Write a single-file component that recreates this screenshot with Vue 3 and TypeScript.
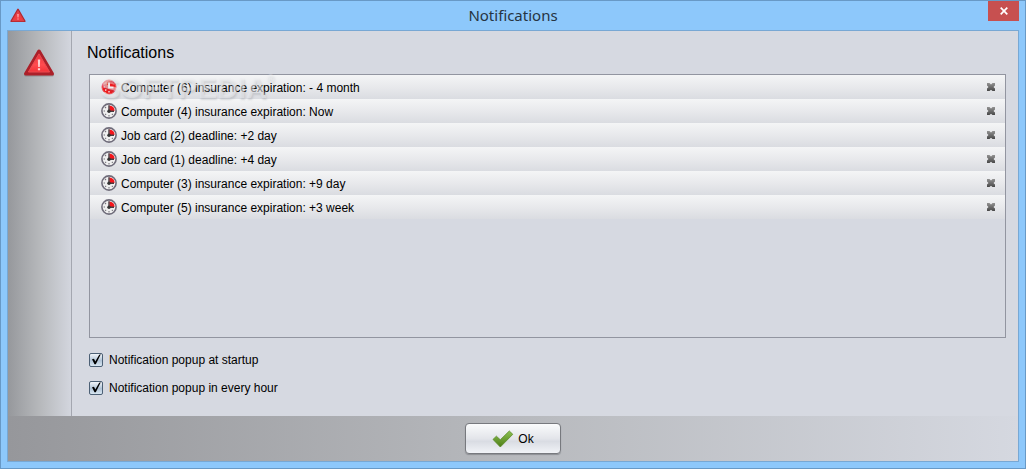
<script setup lang="ts">
import { ref } from 'vue'

interface Notice {
  id: number
  text: string
  overdue: boolean
}

const notices = ref<Notice[]>([
  { id: 1, text: 'Computer (6) insurance expiration: - 4 month', overdue: true },
  { id: 2, text: 'Computer (4) insurance expiration: Now', overdue: false },
  { id: 3, text: 'Job card (2) deadline: +2 day', overdue: false },
  { id: 4, text: 'Job card (1) deadline: +4 day', overdue: false },
  { id: 5, text: 'Computer (3) insurance expiration: +9 day', overdue: false },
  { id: 6, text: 'Computer (5) insurance expiration: +3 week', overdue: false },
])
const atStartup = ref(true)
const everyHour = ref(true)

function dismiss(id: number): void {
  notices.value = notices.value.filter((n) => n.id !== id)
}
</script>

<template>
  <div class="window">
    <header class="titlebar">
      <svg class="app-icon" viewBox="0 0 32 30" aria-hidden="true">
        <path d="M16 3 L29.5 26.5 H2.5 Z" fill="#f03c42" stroke="#b3262e" stroke-width="3.4" stroke-linejoin="round" />
        <path d="M16 5.5 L27.5 25.5 H4.5 Z" fill="none" stroke="#ef5a60" stroke-width="1" stroke-linejoin="round" />
        <path d="M14.8 12 h2.4 l-.4 7 h-1.6 Z M14.9 21 h2.2 v2.2 h-2.2 Z" fill="#ffc9c9" />
      </svg>
      <h1 class="title">Notifications</h1>
      <button class="close" type="button" aria-label="Close">
        <svg viewBox="0 0 8 8" aria-hidden="true"><path d="M.7 .7 L7.3 7.3 M7.3 .7 L.7 7.3" stroke="#fff" stroke-width="1.7" /></svg>
      </button>
    </header>

    <div class="client">
      <div class="body">
        <aside class="side">
          <svg class="warning" viewBox="0 0 32 30" aria-hidden="true">
            <defs>
              <linearGradient id="warn-fill" x1="0" y1="0" x2="0" y2="1">
                <stop offset="0" stop-color="#e8323a" />
                <stop offset=".6" stop-color="#ff4c50" />
                <stop offset="1" stop-color="#f23238" />
              </linearGradient>
            </defs>
            <path d="M16 4 L29.3 26.8 H2.7 Z" fill="#555" stroke="#555" stroke-width="3.4" stroke-linejoin="round" opacity=".35" />
            <path d="M16 3.2 L29.3 25.8 H2.7 Z" fill="#b3222a" stroke="#ac2029" stroke-width="3.4" stroke-linejoin="round" />
            <path d="M16 5.8 L26.6 24 H5.4 Z" fill="url(#warn-fill)" stroke="#ea4a50" stroke-width="1" stroke-linejoin="round" />
            <path d="M14.8 11.5 h2.4 l-.4 7.5 h-1.6 Z M14.9 20.2 h2.2 v2 h-2.2 Z" fill="#ffd2d2" />
          </svg>
        </aside>

        <main class="main">
          <h2 class="heading">Notifications</h2>
          <div class="list-frame">
            <ul class="list">
              <li v-for="n in notices" :key="n.id" class="row">
                <svg v-if="n.overdue" class="clock" viewBox="0 0 16 16" aria-hidden="true">
                  <circle cx="8" cy="8" r="7" fill="#ee1b20" stroke="#f0555a" stroke-width="1" />
                  <path d="M2.2 6 A6.2 6.2 0 0 1 13.8 6 Q8 3.5 2.2 6" fill="#fa8a8c" opacity=".8" />
                  <path d="M8 3.5 V8.6 H12.5" fill="none" stroke="#fff" stroke-width="1.8" />
                  <path d="M2.5 8 h1.5 M8 12 v1.5 M4.3 11.5 l1 -1" stroke="#fff" stroke-width="1.2" />
                </svg>
                <svg v-else class="clock" viewBox="0 0 16 16" aria-hidden="true">
                  <circle cx="8" cy="8" r="7.1" fill="#efefef" stroke="#6f6c7a" stroke-width="1.6" />
                  <path d="M8.4 8 V2.4 A5.4 5.4 0 0 1 13.6 8 Z" fill="#f5141b" />
                  <path d="M8 2.3 V8.3 H13" fill="none" stroke="#4a3b40" stroke-width="1.4" />
                  <circle cx="8" cy="8.3" r="1.7" fill="#333" />
                  <path d="M2.6 8 h1.4 M8 12 v1.6 M4 4 l1 1 M4.2 11.8 l.9 -.9 M11.8 11.8 l-.9 -.9" stroke="#77757c" stroke-width="1.1" />
                </svg>
                <span class="text">{{ n.text }}</span>
                <button class="dismiss" type="button" :aria-label="'Dismiss ' + n.text" @click="dismiss(n.id)">
                  <svg viewBox="0 0 10 10" aria-hidden="true">
                    <defs>
                      <linearGradient :id="'x-' + n.id" x1="0" y1="0" x2="0" y2="1">
                        <stop offset="0" stop-color="#929292" />
                        <stop offset="1" stop-color="#484848" />
                      </linearGradient>
                    </defs>
                    <path d="M1 1 H3.5 L5 2.5 L6.5 1 H9 V3.5 L7.5 5 L9 6.5 V9 H6.5 L5 7.7 L3.5 9 H1 V6.5 L2.5 5 L1 3.5 Z" :fill="'url(#x-' + n.id + ')'" />
                  </svg>
                </button>
              </li>
            </ul>
            <div class="watermark" aria-hidden="true">SOFTPEDIA<span class="reg">®</span></div>
          </div>
          <label class="option">
            <input v-model="atStartup" class="tick" type="checkbox" />
            <span>Notification popup at startup</span>
          </label>
          <label class="option">
            <input v-model="everyHour" class="tick" type="checkbox" />
            <span>Notification popup in every hour</span>
          </label>
        </main>
      </div>

      <footer class="footer">
        <button class="ok" type="button">
          <svg viewBox="0 0 22 18" aria-hidden="true">
            <defs>
              <linearGradient id="ok-fill" x1="0" y1="0" x2="0" y2="1">
                <stop offset="0" stop-color="#8cc152" />
                <stop offset="1" stop-color="#4d7d16" />
              </linearGradient>
            </defs>
            <path d="M1 9.4 L4.4 6.2 L8.3 9.8 L17.3 1 L20.8 4.3 L8.3 17 Z" fill="url(#ok-fill)" stroke="#5c8c2a" stroke-width=".8" stroke-linejoin="round" />
          </svg>
          <span>Ok</span>
        </button>
      </footer>
    </div>
  </div>
</template>

<style>
body {
  margin: 0;
}
</style>

<style scoped>
.window {
  box-sizing: border-box;
  min-height: 100vh;
  display: flex;
  flex-direction: column;
  padding: 0 6px 6px;
  border: 1px solid #6899c6;
  background: #8dc8fb;
  color: #000;
  font: 12px/16px "Liberation Sans", Arial, sans-serif;
}
.titlebar {
  display: grid;
  grid-template-columns: 48px 1fr 48px;
  align-items: center;
  height: 29px;
}
.app-icon {
  width: 16px;
  height: 15px;
  margin-left: 3px;
}
.title {
  margin: 0;
  padding-bottom: 2px;
  text-align: center;
  font: 15px/20px "Noto Sans", "Open Sans", sans-serif;
  color: #263442;
}
.close {
  justify-self: end;
  align-self: start;
  display: grid;
  place-items: center;
  width: 31px;
  height: 20px;
  padding: 0;
  border: 0;
  background: #c75050;
}
.close svg {
  width: 8px;
  height: 8px;
}
.client {
  flex: 1;
  display: flex;
  flex-direction: column;
  border: 1px solid #78a8d4;
  background: #d6d9e1;
}
.body {
  flex: 1;
  display: flex;
}
.side {
  flex: none;
  width: 63px;
  border-right: 1px solid #a4a7b0;
  background: linear-gradient(90deg, #96989c, #b6b8bb 50%, #d3d6de);
}
.warning {
  display: block;
  width: 32px;
  height: 30px;
  margin: 17px 0 0 15px;
}
.main {
  flex: 1;
  display: flex;
  flex-direction: column;
  padding: 12px 12px 20px 17px;
}
.heading {
  margin: 0 0 11px -2px;
  font-size: 16px;
  line-height: 20px;
  font-weight: 400;
}
.list-frame {
  position: relative;
  flex: 1;
  margin-bottom: 2px;
  border: 1px solid #9295a0;
}
.list {
  margin: 0;
  padding: 0;
  list-style: none;
}
.row {
  display: flex;
  align-items: center;
  height: 24px;
  padding: 0 9px 0 11px;
  background: linear-gradient(#f4f5f6, #e8e9ec 50%, #dadce1);
}
.clock {
  width: 16px;
  height: 16px;
}
.text {
  flex: 1;
  margin-left: 4px;
  padding-top: 2px;
}
.dismiss {
  display: grid;
  padding: 0;
  border: 0;
  background: none;
}
.dismiss svg {
  width: 10px;
  height: 10px;
}
.watermark {
  position: absolute;
  top: -2px;
  left: 11px;
  font-size: 29px;
  line-height: 30px;
  font-weight: 700;
  color: rgba(238, 239, 241, 0.5);
  text-shadow: 1px 2px 2px rgba(100, 105, 115, 0.2);
  pointer-events: none;
}
.reg {
  font-size: 10px;
  vertical-align: top;
  line-height: 12px;
}
.option {
  display: flex;
  align-items: center;
  gap: 6px;
  height: 16px;
  margin-top: 12px;
}
.tick {
  appearance: none;
  box-sizing: border-box;
  width: 14px;
  height: 14px;
  margin: 0;
  border: 1px solid #4c6075;
  border-radius: 2px;
  background: linear-gradient(#f2f6fa, #b0c3d6 55%, #d9e7f2);
}
.tick:checked {
  background: url("data:image/svg+xml,%3Csvg xmlns='http://www.w3.org/2000/svg' viewBox='0 0 12 12'%3E%3Cpath d='M2 5.3 L4 4.8 L5.3 7.5 L9.2 .8 L10.8 .3 L5.8 10.2 H4.5 Z' fill='%23000'/%3E%3C/svg%3E") center / 12px 12px no-repeat, linear-gradient(#f2f6fa, #b0c3d6 55%, #d9e7f2);
}
.footer {
  display: flex;
  justify-content: center;
  padding: 7px 0;
  background: linear-gradient(90deg, #96979b, #b7b9bd 50%, #d5d8e0);
}
.ok {
  display: flex;
  align-items: center;
  justify-content: center;
  gap: 4px;
  width: 96px;
  height: 31px;
  padding: 0;
  border: 1px solid #77797e;
  border-radius: 4px;
  background: linear-gradient(#fafbfc, #e3e5ea 50%, #d9dce3 60%, #f1f3f7);
  box-shadow: 0 1px 1px #8d8f94;
  color: #000;
  font: inherit;
}
.ok svg {
  width: 22px;
  height: 18px;
}
</style>
